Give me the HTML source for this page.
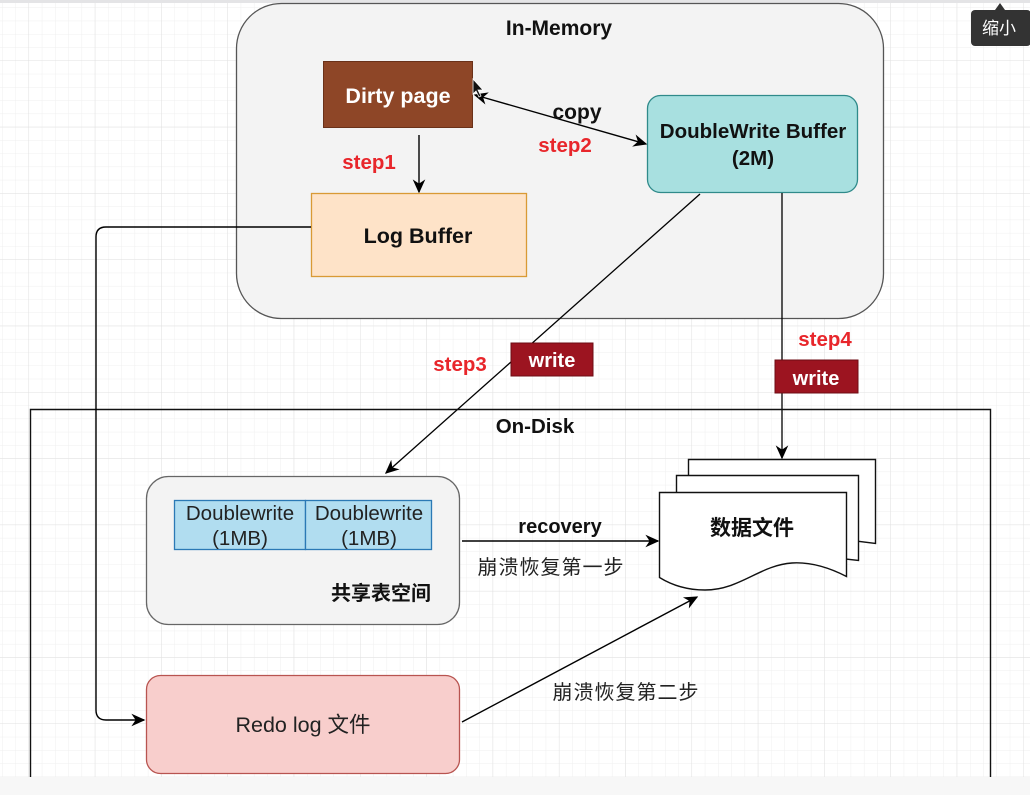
<!DOCTYPE html>
<html><head><meta charset="utf-8"><style>
html,body{margin:0;padding:0;width:1030px;height:795px;overflow:hidden;background:#fff}
svg{display:block}
text{font-family:"Liberation Sans","Noto Sans CJK SC",sans-serif}
</style></head><body>
<svg width="1030" height="795" viewBox="0 0 1030 795" xmlns="http://www.w3.org/2000/svg">
<defs>
<pattern id="minor" x="2.5" y="-5.3" width="13.26" height="13.26" patternUnits="userSpaceOnUse">
<path d="M13.26 0V13.26M0 13.26H13.26" stroke="#efefef" stroke-width="1" fill="none"/>
</pattern>
<pattern id="major" x="-37.3" y="-5.3" width="66.3" height="66.3" patternUnits="userSpaceOnUse">
<path d="M66.3 0V66.3M0 66.3H66.3" stroke="#e1e1e1" stroke-width="1" fill="none"/>
</pattern>
<marker id="ar" viewBox="0 0 10 10" refX="9" refY="5" markerWidth="14" markerHeight="14" orient="auto-start-reverse" markerUnits="userSpaceOnUse">
<path d="M0 0.5L10 5L0 9.5L3 5Z" fill="#000"/>
</marker>
</defs>
<rect width="1030" height="795" fill="#fff"/>
<rect width="1030" height="777" fill="url(#minor)"/>
<rect width="1030" height="777" fill="url(#major)"/>
<rect y="0" width="1030" height="3" fill="#e4e4e6"/>

<!-- In-Memory -->
<rect x="236.5" y="3.5" width="647" height="315" rx="45" fill="#f3f3f3" stroke="#555" stroke-width="1.3"/>
<text x="559" y="35" font-size="21" font-weight="bold" text-anchor="middle" fill="#111">In-Memory</text>

<rect x="323.5" y="61.5" width="149" height="66" fill="#8e4627" stroke="#6a3119"/>
<text x="398" y="103" font-size="21.5" font-weight="bold" text-anchor="middle" fill="#fff">Dirty page</text>

<line x1="419" y1="135" x2="419" y2="192" stroke="#000" stroke-width="1.4" marker-end="url(#ar)"/>
<text x="369" y="169" font-size="20.5" font-weight="bold" text-anchor="middle" fill="#e8262b">step1</text>

<rect x="311.5" y="193.5" width="215" height="83" fill="#fee3c8" stroke="#d99a35" stroke-width="1.3"/>
<text x="418" y="243" font-size="21.5" font-weight="bold" text-anchor="middle" fill="#111">Log Buffer</text>

<rect x="647.5" y="95.5" width="210" height="97" rx="13" fill="#a8e0e0" stroke="#2f8a8a" stroke-width="1.3"/>
<text x="753" y="138" font-size="20.5" font-weight="bold" text-anchor="middle" fill="#111">DoubleWrite Buffer</text>
<text x="753" y="165" font-size="20.5" font-weight="bold" text-anchor="middle" fill="#111">(2M)</text>

<line x1="646" y1="144" x2="475" y2="95" stroke="#000" stroke-width="1.4" marker-start="url(#ar)" marker-end="url(#ar)"/>
<path d="M473 79 L473 94 L476 91 L479 97 L481 96 L478 90 L483 90 Z" fill="#111" stroke="#fff" stroke-width="0.8"/>
<text x="577" y="119" font-size="21" font-weight="bold" text-anchor="middle" fill="#111">copy</text>
<text x="565" y="152" font-size="20.5" font-weight="bold" text-anchor="middle" fill="#e8262b">step2</text>

<!-- step3 line -->
<line x1="700" y1="194" x2="386" y2="473" stroke="#000" stroke-width="1.3" marker-end="url(#ar)"/>
<rect x="511" y="343" width="82" height="33" fill="#9c1420" stroke="#6e0d15"/>
<text x="552" y="367" font-size="20" font-weight="bold" text-anchor="middle" fill="#fff">write</text>
<text x="460" y="371" font-size="20.5" font-weight="bold" text-anchor="middle" fill="#e8262b">step3</text>

<!-- step4 line -->
<line x1="782" y1="193" x2="782" y2="458" stroke="#000" stroke-width="1.3" marker-end="url(#ar)"/>
<rect x="775" y="360" width="83" height="33" fill="#9c1420" stroke="#6e0d15"/>
<text x="816" y="385" font-size="20" font-weight="bold" text-anchor="middle" fill="#fff">write</text>
<text x="825" y="346" font-size="20.5" font-weight="bold" text-anchor="middle" fill="#e8262b">step4</text>

<!-- On-Disk -->
<path d="M30.5 800 V409.5 H990.5 V800" fill="none" stroke="#111" stroke-width="1.4"/>
<text x="535" y="433" font-size="20.5" font-weight="bold" text-anchor="middle" fill="#111">On-Disk</text>

<!-- Log buffer to redo -->
<path d="M311 227 H106 Q96 227 96 237 V710 Q96 720 106 720 H144" fill="none" stroke="#000" stroke-width="1.4" marker-end="url(#ar)"/>

<!-- shared tablespace -->
<rect x="146.5" y="476.5" width="313" height="148" rx="22" fill="#f3f3f3" stroke="#666" stroke-width="1.3"/>
<rect x="174.5" y="500.5" width="131" height="49" fill="#b1ddf0" stroke="#2b79b5" stroke-width="1.3"/>
<rect x="305.5" y="500.5" width="126" height="49" fill="#b1ddf0" stroke="#2b79b5" stroke-width="1.3"/>
<text x="240" y="520" font-size="20.5" text-anchor="middle" fill="#222">Doublewrite</text>
<text x="240" y="545" font-size="20.5" text-anchor="middle" fill="#222">(1MB)</text>
<text x="369" y="520" font-size="20.5" text-anchor="middle" fill="#222">Doublewrite</text>
<text x="369" y="545" font-size="20.5" text-anchor="middle" fill="#222">(1MB)</text>
<text x="431" y="600" font-size="20" font-weight="bold" text-anchor="end" fill="#111">共享表空间</text>

<line x1="462" y1="541" x2="658" y2="541" stroke="#000" stroke-width="1.4" marker-end="url(#ar)"/>
<text x="560" y="533" font-size="20" font-weight="bold" text-anchor="middle" fill="#111">recovery</text>
<text x="551" y="574" font-size="20" letter-spacing="1" text-anchor="middle" fill="#222">崩溃恢复第一步</text>

<!-- data files -->
<path d="M688.5 459.5 H875.5 V543.5 L688.5 520 Z" fill="#fff" stroke="#111" stroke-width="1.4"/>
<path d="M676.5 475.5 H858.5 V560.5 L676.5 540 Z" fill="#fff" stroke="#111" stroke-width="1.4"/>
<path d="M659.5 492.5 H846.5 V576.5 C826 566 808 562 792 563 C760 565 740 590 705 590 C685 590 670 584 659.5 577.5 Z" fill="#fff" stroke="#111" stroke-width="1.4"/>
<text x="752" y="535" font-size="21" font-weight="bold" text-anchor="middle" fill="#111">数据文件</text>

<line x1="462" y1="722" x2="697" y2="597" stroke="#000" stroke-width="1.4" marker-end="url(#ar)"/>
<text x="626" y="699" font-size="20" letter-spacing="1" text-anchor="middle" fill="#222">崩溃恢复第二步</text>

<!-- redo -->
<rect x="146.5" y="675.5" width="313" height="98" rx="14" fill="#f8cecc" stroke="#b85450" stroke-width="1.3"/>
<text x="303" y="732" font-size="21.5" text-anchor="middle" fill="#222">Redo log 文件</text>

<rect y="777" width="1030" height="18" fill="#f7f7f7"/>

<!-- tooltip -->
<path d="M995 10 L1000 3 L1005 10 Z" fill="#333"/>
<rect x="971" y="10" width="60" height="36" rx="4" fill="#333"/>
<text x="999" y="34" font-size="17" text-anchor="middle" fill="#fff">缩小</text>
</svg>
</body></html>
